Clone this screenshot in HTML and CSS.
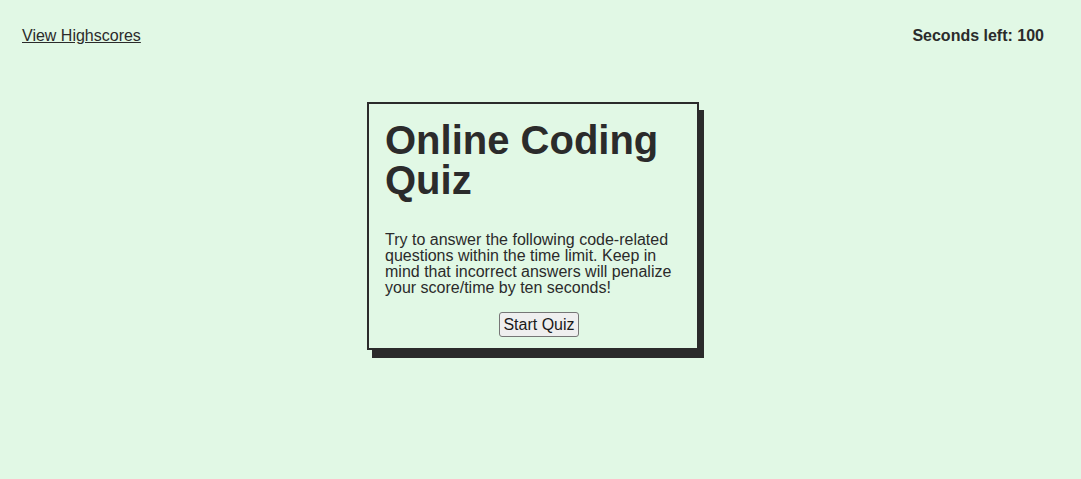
FILE: index.html
```html
<!DOCTYPE html>
<html lang="en">
<head>
<meta charset="utf-8">
<title>Online Coding Quiz</title>
<link rel="stylesheet" href="styles.css">
</head>
<body>
<div class="page">
  <header class="topbar">
    <a class="highscores" href="#">View Highscores</a>
    <span class="timer">Seconds left: 100</span>
  </header>
  <main class="stage">
    <section class="card">
      <h1 class="title">Online Coding Quiz</h1>
      <p class="intro">Try to answer the following code-related questions within the time limit. Keep in mind that incorrect answers will penalize your score/time by ten seconds!</p>
      <div class="actions">
        <button class="start" type="button">Start Quiz</button>
      </div>
    </section>
  </main>
</div>
</body>
</html>
```

FILE: styles.css
```css
html, body {
  margin: 0;
  padding: 0;
  background: #e1f8e5;
}
body {
  font-family: "Liberation Sans", Arial, Helvetica, sans-serif;
  color: #2b2b2b;
  font-size: 16px;
}
.page {
  width: 1066px;
  min-height: 479px;
}
.topbar {
  display: flex;
  justify-content: space-between;
  align-items: flex-start;
  padding: 27px 22px 0 22px;
  line-height: 18px;
}
.highscores {
  color: #2b2b2b;
  text-decoration: underline;
}
.timer {
  font-weight: bold;
}
.stage {
  display: flex;
  justify-content: center;
  padding-top: 57px;
}
.card {
  width: 296px;
  border: 2px solid #2b2b2b;
  padding: 16px 16px 11px 16px;
  box-shadow: 5px 8px 0 #2b2b2b;
}
.title {
  margin: 0;
  font-size: 40px;
  line-height: 40px;
  font-weight: bold;
}
.intro {
  margin: 32px 0 16px 0;
  font-size: 16px;
  line-height: 16px;
}
.actions {
  display: flex;
  justify-content: center;
  padding-left: 12px;
}
.start {
  font-family: "Liberation Sans", Arial, Helvetica, sans-serif;
  font-size: 16px;
  line-height: 19px;
  white-space: nowrap;
  color: #1a1a1a;
  background: #efefef;
  border: 1px solid #767676;
  border-radius: 3px;
  padding: 2px 3px;
  height: 25px;
}
```
